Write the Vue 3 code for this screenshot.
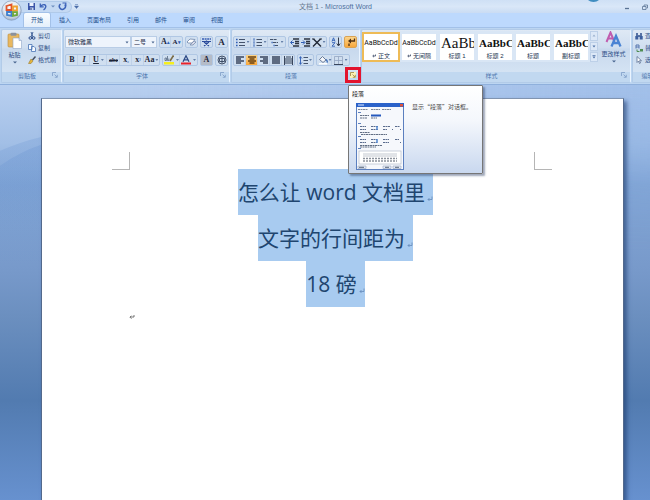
<script setup>
import { ref } from 'vue'

const tabs = ['开始', '插入', '页面布局', '引用', '邮件', '审阅', '视图']
const active = ref('开始')
const fontName = ref('微软雅黑')
const fontSize = ref('二号')
const lines = ['怎么让 word 文档里', '文字的行间距为', '18 磅']
const styles = [
  { sample: 'AaBbCcDd', name: '正文', kind: 'plain', mark: true, on: true },
  { sample: 'AaBbCcDd', name: '无间隔', kind: 'plain', mark: true },
  { sample: 'AaBb', name: '标题 1', kind: 'large' },
  { sample: 'AaBbC', name: '标题 2', kind: 'medium' },
  { sample: 'AaBbC', name: '标题', kind: 'medium' },
  { sample: 'AaBbC', name: '副标题', kind: 'medium' }
]
</script>

<template>
  <div class="app">
    <header class="top">
      <div class="titlebar">
        <div class="quick">
          <button class="ic" aria-label="保存">
            <svg width="9" height="9" viewBox="0 0 9 9"><path d="M1 1h7v7H1z" fill="#3b55a8" /><path d="M2.5 1h4v3h-4z" fill="#eef4ff" /><path d="M3 5.5h3.500V8H3z" fill="#c6d6f0" /><path d="M3.500 6h1v2h-1z" fill="#28387c" /></svg>
          </button>
          <button class="ic" aria-label="撤销">
            <svg width="9" height="9" viewBox="0 0 9 9"><path d="M1.300 1.500v3.300h3.400" fill="none" stroke="#3c62b8" stroke-width="1.300" /><path d="M1.500 4.500C4 1.500 8 2.500 6.500 5.500Q6 7 4.500 8" fill="none" stroke="#3c62b8" stroke-width="1.400" /></svg>
          </button>
          <svg width="4" height="3" viewBox="0 0 4 3"><path d="M0 .5h4L2 2.500z" fill="#6d8fbf" /></svg>
          <button class="ic" aria-label="恢复">
            <svg width="9" height="9" viewBox="0 0 9 9"><path d="M2.500 2A3 3 0 1 0 6.800 2.500" fill="none" stroke="#3c62b8" stroke-width="1.500" /><path d="M4.500 1h3.300v3" fill="none" stroke="#3c62b8" stroke-width="1.200" /></svg>
          </button>
        </div>
        <svg class="more" width="5" height="5" viewBox="0 0 5 5"><path d="M1 .5h3M.5 2h4L2.500 4.500z" fill="#4a6da8" stroke="#4a6da8" stroke-width=".5" /></svg>
        <h1 class="title">文档 1 - <span>Microsoft Word</span></h1>
        <div class="win">
          <button class="ic" aria-label="最小化"><svg width="6" height="6" viewBox="0 0 6 6"><path d="M1 4.500h4" stroke="#5a7394" stroke-width="1.300" /></svg></button>
          <button class="ic" aria-label="还原"><svg width="6" height="6" viewBox="0 0 6 6"><path d="M2 2V1h3.500v3h-1M.5 2.500H4v3H.5z" fill="none" stroke="#5a7394" stroke-width=".8" /></svg></button>
        </div>
      </div>
      <div class="bubble"></div>
      <nav class="tabs">
        <button v-for="t in tabs" :key="t" class="tab" :class="{ on: t === active }" @click="active = t">{{ t }}</button>
      </nav>
      <button class="orb" aria-label="Office">
        <svg width="21" height="21" viewBox="0 0 21 21">
          <defs><radialGradient id="orb" cx=".5" cy=".35" r=".65"><stop offset="0" stop-color="#ffffff" /><stop offset=".65" stop-color="#dfe6ef" /><stop offset="1" stop-color="#9fb0c8" /></radialGradient></defs>
          <circle cx="10.500" cy="10.500" r="9.700" fill="url(#orb)" stroke="#7f95b5" stroke-width=".7" />
          <g fill="none" stroke-width="1.800"><path d="M5.500 6l5-1.500V10h-5z" stroke="#e2552b" /><path d="M12 6.500h4v4h-4z" stroke="#f0a030" /><path d="M6 12h4.500v4L6 15z" stroke="#3f7fce" /><path d="M12 12.200h4v2.800l-4 .8z" stroke="#6da83a" /></g>
        </svg>
      </button>
    </header>

    <section class="ribbon">
      <div class="group clip">
        <div class="body cliprow">
          <button class="big">
            <svg width="15" height="17" viewBox="0 0 15 17"><rect x="1" y="2" width="11" height="13" rx="1" fill="#e9b860" stroke="#b88a3c" stroke-width=".6" /><rect x="3.500" y=".7" width="6" height="3" rx="1" fill="#8b919c" /><path d="M6 6h6l2.500 2.500v8H6z" fill="#fff" stroke="#8fa6c9" stroke-width=".6" /><path d="M12 6v2.500h2.500" fill="#d4e0f2" stroke="#8fa6c9" stroke-width=".6" /></svg>
            <span>粘贴</span>
            <svg width="4" height="3" viewBox="0 0 4 3"><path d="M0 .5h4L2 2.500z" fill="#49658f" /></svg>
          </button>
          <div class="list">
            <button class="line"><svg width="8" height="8" viewBox="0 0 8 8"><path d="M3 0l2 5M5 0L3 5" stroke="#45649c" /><circle cx="2.300" cy="6" r="1.300" fill="none" stroke="#2c4c8a" /><circle cx="5.700" cy="6" r="1.300" fill="none" stroke="#2c4c8a" /></svg>剪切</button>
            <button class="line"><svg width="8" height="8" viewBox="0 0 8 8"><path d="M.5.5h3.500v5H.5zM3.500 2.500H6l1.500 1.500v3.500h-4z" fill="#f6faff" stroke="#4a73b5" stroke-width=".8" /></svg>复制</button>
            <button class="line"><svg width="8" height="8" viewBox="0 0 8 8"><path d="M7.500.5L4.500 4" stroke="#444c5c" stroke-width="1.500" /><path d="M3 3l2 2-2 2.500H.5z" fill="#e5b53c" stroke="#8c6c20" stroke-width=".5" /></svg>格式刷</button>
          </div>
        </div>
        <div class="cap"><span>剪贴板</span><button class="launch" aria-label="剪贴板选项"><svg width="6" height="6" viewBox="0 0 6 6"><path d="M.5 4V.5H4M2.500 2.500L5 5M5.300 2.800v2.500H2.800" fill="none" stroke="#7f9dc6" stroke-width=".8" /></svg></button></div>
      </div>

      <div class="group">
        <div class="body rows">
          <div class="row slim">
            <div class="combos">
              <label class="combo font"><select v-model="fontName" aria-label="字体"><option>微软雅黑</option></select><svg width="4" height="3" viewBox="0 0 4 3"><path d="M.5.5h3L2 2.500z" fill="#49658f" /></svg></label>
              <label class="combo size"><select v-model="fontSize" aria-label="字号"><option>二号</option></select><svg width="4" height="3" viewBox="0 0 4 3"><path d="M.5.5h3L2 2.500z" fill="#49658f" /></svg></label>
            </div>
            <div class="seg">
              <button class="tb serif">A<sup>▴</sup></button>
              <button class="tb serif small">A<sup>▾</sup></button>
            </div>
            <div class="seg"><button class="tb" aria-label="清除格式"><svg width="11" height="10" viewBox="0 0 11 10"><path d="M1 5l3-3 5 .5L6 6H2z" fill="#fff" stroke="#6f85a8" stroke-width=".8" /><path d="M4 8l4-4 2 1-3 3z" fill="#d9d9e8" stroke="#6f85a8" stroke-width=".7" /></svg></button></div>
            <div class="seg"><button class="tb" aria-label="拼音指南"><svg width="11" height="10" viewBox="0 0 11 10"><path d="M1 2h9" stroke="#385fb4" stroke-width="1.600" stroke-dasharray="2 .6" /><path d="M1 4.500h9M3 5l5 4M8 5L3 9M5.500 3.500v2" fill="none" stroke="#2c4c9c" stroke-width="1.200" /></svg></button></div>
            <div class="seg"><button class="tb serif boxed">A</button></div>
          </div>
          <div class="row">
            <div class="seg">
              <button class="tb serif">B</button>
              <button class="tb serif ital">I</button>
              <button class="tb serif wide"><u>U</u><i class="dd"></i></button>
              <button class="tb serif tiny"><s>abc</s></button>
              <button class="tb serif">x<sub>₂</sub></button>
              <button class="tb serif">x<sup>²</sup></button>
              <button class="tb serif mid">Aa<i class="dd"></i></button>
            </div>
            <div class="seg">
              <button class="tb wide" aria-label="突出显示"><svg width="10" height="10" viewBox="0 0 10 10"><path d="M0 7h10v2.500H0z" fill="#f5ee1e" /><path d="M1 5.500V3h1.500v2.500zM3.500 1v4.500h1.300V3.500" fill="none" stroke="#63758c" stroke-width=".9" /><path d="M9.500.5L6 6" stroke="#7a6c48" stroke-width="1.600" /></svg><i class="dd"></i></button>
              <button class="tb wide" aria-label="字体颜色"><svg width="10" height="10" viewBox="0 0 10 10"><path d="M0 7.500h10v2H0z" fill="#e8202a" /><path d="M2 6.800L5 .8l3 6M3.300 4.800h3.400" fill="none" stroke="#2e4a86" stroke-width="1.300" /></svg><i class="dd"></i></button>
            </div>
            <div class="seg slimseg"><button class="tb serif shade">A</button></div>
            <div class="seg slimseg"><button class="tb" aria-label="带圈字符"><svg width="10" height="10" viewBox="0 0 10 10"><circle cx="5" cy="5" r="4" fill="none" stroke="#34435c" stroke-width=".9" /><path d="M2.500 3.500h5v3h-5zM5 1.500v7" fill="none" stroke="#34435c" stroke-width=".9" /></svg></button></div>
          </div>
        </div>
        <div class="cap"><span>字体</span><button class="launch" aria-label="字体选项"><svg width="6" height="6" viewBox="0 0 6 6"><path d="M.5 4V.5H4M2.500 2.500L5 5M5.300 2.800v2.500H2.800" fill="none" stroke="#7f9dc6" stroke-width=".8" /></svg></button></div>
      </div>

      <div class="group para">
        <div class="body rows">
          <div class="row slim">
            <div class="seg">
              <button class="tb wide" aria-label="项目符号"><svg width="9" height="9" viewBox="0 0 9 9"><path d="M3 1.500h6M3 4.500h6M3 7.500h6" stroke="#44536c" /><path d="M0 1.500h1.600M0 4.500h1.600M0 7.500h1.600" stroke="#2f5eb5" stroke-width="1.600" /></svg><i class="dd"></i></button>
              <button class="tb wide" aria-label="编号"><svg width="9" height="9" viewBox="0 0 9 9"><path d="M3.500 1.500H9M3.500 4.500H9M3.500 7.500H9" stroke="#44536c" /><path d="M1 .3v2.400M1 3.300v2.400M1 6.300v2.400" stroke="#2f5eb5" /></svg><i class="dd"></i></button>
              <button class="tb wide" aria-label="多级列表"><svg width="9" height="9" viewBox="0 0 9 9"><path d="M0 1.500h7M3 4.500h5M5 7.500h3" stroke="#44536c" stroke-dasharray="3 .6" /><path d="M1.500 4.500h1.200M3.500 7.500h1.200" stroke="#2f5eb5" stroke-width="1.300" /></svg><i class="dd"></i></button>
            </div>
            <div class="seg">
              <button class="tb" aria-label="减少缩进"><svg width="10" height="9" viewBox="0 0 10 9"><path d="M3 1h6M5 3.500h4M5 5.500h4M3 8h6" stroke="#2c3442" stroke-width="1.400" /><path d="M4 4.500H1M2.500 2.500l-2 2 2 2" fill="none" stroke="#2f5eb5" /></svg></button>
              <button class="tb" aria-label="增加缩进"><svg width="10" height="9" viewBox="0 0 10 9"><path d="M3 1h6M5 3.500h4M5 5.500h4M3 8h6" stroke="#2c3442" stroke-width="1.400" /><path d="M0 4.500h3.500M2 2.500l2 2-2 2" fill="none" stroke="#2f5eb5" /></svg></button>
              <button class="tb mid" aria-label="中文版式"><svg width="10" height="9" viewBox="0 0 10 9"><path d="M1 8.500l4-4 4 4M1.500 1L5 4.500 8.500 1" fill="none" stroke="#222a38" stroke-width="1.400" /><path d="M0 1h2.500M7.500 1H10" stroke="#222a38" /></svg><i class="dd"></i></button>
            </div>
            <div class="seg"><button class="tb" aria-label="排序"><svg width="10" height="10" viewBox="0 0 10 10"><path d="M1 4.500L2.500.8 4 4.500M1.500 3.300h2M1 5.700h3L1 9.200h3" fill="none" stroke="#2f5eb5" stroke-width=".9" /><path d="M7.500.5v8M5.800 6.500l1.700 2.500 1.700-2.500" fill="none" stroke="#333c4e" /></svg></button></div>
            <div class="seg hot"><button class="tb" aria-label="显示编辑标记"><svg width="10" height="10" viewBox="0 0 10 10"><path d="M8.500 1.500v2.500H4" fill="none" stroke="#503012" stroke-width="1.300" /><path d="M5 1.500L2 4l3 2.500z" fill="#503012" /><path d="M3 6.500v2.500" stroke="#503012" stroke-width="1.300" /></svg></button></div>
          </div>
          <div class="row">
            <div class="seg">
              <button class="tb" aria-label="左对齐"><svg width="8" height="9" viewBox="0 0 8 9"><path d="M0 1h8M0 3h5M0 5h8M0 7h5" stroke="#39465c" stroke-width="1.300" /></svg></button>
              <button class="tb pressed" aria-label="居中"><svg width="8" height="9" viewBox="0 0 8 9"><path d="M0 1h8M1.500 3h5M0 5h8M1.500 7h5" stroke="#6b4312" stroke-width="1.300" /></svg></button>
              <button class="tb" aria-label="右对齐"><svg width="8" height="9" viewBox="0 0 8 9"><path d="M0 1h8M3 3h5M0 5h8M3 7h5" stroke="#39465c" stroke-width="1.300" /></svg></button>
              <button class="tb" aria-label="两端对齐"><svg width="8" height="9" viewBox="0 0 8 9"><path d="M0 1h8M0 3h8M0 5h8M0 7h8" stroke="#39465c" stroke-width="1.300" /></svg></button>
              <button class="tb" aria-label="分散对齐"><svg width="9" height="9" viewBox="0 0 9 9"><path d="M1 3h7M1 5h7M1 7h7M.5 0v9M8.500 0v9M2 1h5" stroke="#39465c" /></svg></button>
            </div>
            <div class="seg"><button class="tb mid" aria-label="行距"><svg width="9" height="9" viewBox="0 0 9 9"><path d="M4.500 1.500H9M4.500 4.500H9M4.500 7.500H9" stroke="#44536c" /><path d="M1.500.5v8M0 2.500L1.500.8 3 2.500M0 6.500l1.500 1.700L3 6.500" fill="none" stroke="#2f5eb5" stroke-width=".9" /></svg><i class="dd"></i></button></div>
            <div class="seg">
              <button class="tb mid" aria-label="底纹"><svg width="10" height="10" viewBox="0 0 10 10"><path d="M1.500 4.500L4.500 1.500l3.500 3.500-3 2.500z" fill="#f5f7fb" stroke="#5d6f8c" stroke-width=".9" /><path d="M8 4.500q2 2 .8 3" fill="none" stroke="#3568b8" stroke-width="1.200" /><path d="M1 8.800h8" stroke="#fff" stroke-width="1.500" /></svg><i class="dd"></i></button>
              <button class="tb wide" aria-label="边框"><svg width="9" height="9" viewBox="0 0 9 9"><path d="M.5.5h8v8M.5.5v8M4.500.5v8M.5 4.500h8" fill="none" stroke="#93a5c2" stroke-width=".8" /><path d="M0 8.500h9" stroke="#39465c" /></svg><i class="dd"></i></button>
            </div>
          </div>
        </div>
        <div class="cap"><span>段落</span><button class="launch lit" aria-describedby="tip" aria-label="段落选项"><svg width="6" height="6" viewBox="0 0 6 6"><path d="M.5 4V.5H4M2.500 2.500L5 5M5.300 2.800v2.500H2.800" fill="none" stroke="#9a8340" stroke-width=".8" /></svg></button></div>
        <div id="tip" class="tip" role="tooltip">
          <strong>段落</strong>
          <div class="tiprow">
            <svg width="48" height="67" viewBox="0 0 48 67">
              <rect x=".5" y=".5" width="47" height="66" fill="#f6f8fc" stroke="#5b7fbf" /><path d="M0 0h48v4H0z" fill="#2b62c9" /><path d="M2 2h6" stroke="#dce8ff" /><path d="M44 1h3v2.500h-3z" fill="#e0533a" />
              <path d="M2 6.500h10M15 6.500h9M26 6.500h9" stroke="#7d8796" stroke-dasharray="2 .5" />
              <path d="M2 9.500h3M2 20.500h3M2 33.500h3M2 45.500h3" stroke="#5d80bd" />
              <path d="M4 12.500h9M4 15h7M15 15h6" stroke="#626f84" stroke-dasharray="2 .5" /><path d="M15 12.500h10" stroke="#2458bd" stroke-width="2" />
              <path d="M4 23.500h6M15 23.500h7M27 23.500h7M39 23.500h5M4 26.500h6M15 26.500h7M27 26.500h4M36 26.500h1M44 26.500h1M4 36.500h6M15 36.500h6M27 36.500h6M39 36.500h4M4 39.500h6M15 39.500h6M27 39.500h6M44 39.500h1" stroke="#5a6c8e" stroke-dasharray="2 .5" />
              <path d="M21 23v4M21 36v4" stroke="#5085d0" stroke-width="1.500" />
              <path d="M4 29.500h10M5 31.500h26M4 42.500h22M4 44h16" stroke="#626f84" stroke-dasharray="2 .5" />
              <rect x="3" y="48" width="42" height="13" fill="#fff" stroke="#a8b2c2" stroke-width=".6" />
              <path d="M7 51h34M7 53h34" stroke="#c3c8d0" /><path d="M7 55.500h34M7 58h34" stroke="#8b919b" stroke-width="1.500" stroke-dasharray="2 1" />
              <path d="M2 63h8v2.500H2zM27 63h8v2.500h-8zM37 63h8v2.500h-8z" fill="#e8edf6" stroke="#8495b0" stroke-width=".5" /><path d="M29 64.300h4M39 64.300h4M3 64.300h5" stroke="#58657a" />
            </svg>
            <p>显示“段落”对话框。</p>
          </div>
        </div>
      </div>

      <div class="group">
        <div class="body stylerow">
          <div class="gallery">
            <button v-for="s in styles" :key="s.name" class="card" :class="{ chosen: s.on }">
              <span class="sample" :class="s.kind">{{ s.sample }}</span>
              <span class="sname"><svg v-if="s.mark" width="4" height="4" viewBox="0 0 4 4"><path d="M3.500.5v1.500H1M2 .8L.7 2 2 3.200" fill="none" stroke="#3c4a66" stroke-width=".8" /></svg>{{ s.name }}</span>
            </button>
          </div>
          <div class="scroll">
            <button aria-label="上一行"><svg width="4" height="3" viewBox="0 0 4 3"><path d="M.5 2.500h3L2 .5z" fill="#9bb0cd" /></svg></button>
            <button aria-label="下一行"><svg width="4" height="3" viewBox="0 0 4 3"><path d="M.5.5h3L2 2.500z" fill="#4d70a5" /></svg></button>
            <button aria-label="其他"><svg width="4" height="4" viewBox="0 0 4 4"><path d="M.5 0h3v.8h-3zM.5 1.500h3L2 3.500z" fill="#4d70a5" /></svg></button>
          </div>
          <button class="big change">
            <svg width="17" height="17" viewBox="0 0 17 17"><path d="M1.500 11L5.500 1.500 9.500 11M3 7.500h5" fill="none" stroke="#c05cae" stroke-width="2" /><path d="M6.500 15.500L11 5l4.500 10.500M8 12h6" fill="none" stroke="#4a84d4" stroke-width="2.300" /></svg>
            <span>更改样式</span>
            <svg width="4" height="3" viewBox="0 0 4 3"><path d="M0 .5h4L2 2.500z" fill="#49658f" /></svg>
          </button>
        </div>
        <div class="cap"><span>样式</span><button class="launch" aria-label="样式选项"><svg width="6" height="6" viewBox="0 0 6 6"><path d="M.5 4V.5H4M2.500 2.500L5 5M5.300 2.800v2.500H2.800" fill="none" stroke="#7f9dc6" stroke-width=".8" /></svg></button></div>
      </div>

      <div class="group">
        <div class="body edit">
          <div class="list">
            <button class="line"><svg width="8" height="8" viewBox="0 0 8 8"><path d="M2 1v3M6 1v3M4 3v2" stroke="#2c4c8a" stroke-width="1.500" /><path d="M.3 4h3v3.500h-3zM4.700 4h3v3.500h-3z" fill="#3d5f9e" /></svg>查找</button>
            <button class="line"><svg width="8" height="8" viewBox="0 0 8 8"><path d="M1 4.500V1h3v3.500M1 3h3" fill="none" stroke="#5677ae" /><path d="M2 5.500v2h2.500" fill="none" stroke="#4f8d52" /><path d="M5 5h3v2.500H5z" fill="#4f8d52" /></svg>替换</button>
            <button class="line"><svg width="8" height="8" viewBox="0 0 8 8"><path d="M2 .5v6l1.500-1.500 1 2.500 1-.5-1-2.300h2z" fill="#fff" stroke="#5a6f92" stroke-width=".8" /></svg>选择</button>
          </div>
        </div>
        <div class="cap"><span>编辑</span></div>
      </div>
    </section>

    <main class="desk">
      <svg class="swoosh" viewBox="0 0 650 416" preserveAspectRatio="none"><defs><linearGradient id="sw" x1="0" y1="0" x2="0" y2="1"><stop offset="0" stop-color="#5d8bcd" stop-opacity=".28" /><stop offset="1" stop-color="#5d8bcd" stop-opacity="0" /></linearGradient></defs><path d="M0 66Q20 57 41 52L200 30V140H0z" fill="url(#sw)" /><path d="M0 81Q20 67 41 60L200 40V180H0z" fill="url(#sw)" /></svg>
      <article class="page">
        <div class="marks"><i class="crop left"></i><i class="crop right"></i></div>
        <div class="doc">
          <p v-for="l in lines" :key="l">{{ l }}<svg width="6" height="6" viewBox="0 0 6 6"><path d="M5 .5v3H1M2.500 2L1 3.500 2.500 5" fill="none" stroke="#5c83b3" stroke-width=".7" /></svg></p>
        </div>
        <svg class="pilcrow" width="6" height="6" viewBox="0 0 6 6"><path d="M5 1v2H1M2.500 1.700L1 3.200l1.500 1.500" fill="none" stroke="#555" stroke-width=".8" /></svg>
      </article>
    </main>
  </div>
</template>

<style>
html, body { margin: 0; background: #527bb0; }
</style>

<style scoped>
.app { min-height: 100vh; display: flex; flex-direction: column; overflow: hidden; font: 6px/8px "Liberation Sans", "Noto Sans CJK SC", sans-serif; color: #2f4f86; }
.app * { box-sizing: border-box; }
button { border: 0; padding: 0; margin: 0; background: none; font: inherit; color: inherit; }
svg { display: block; flex: none; }
p, h1 { margin: 0; }

.top { position: relative; background: #bdd9fd; }
.titlebar { display: flex; align-items: center; height: 13px; background: linear-gradient(#cfe0f5, #d9e7f8 50%, #cadcf3); padding-right: 2px; }
.quick { display: flex; align-items: center; gap: 3px; height: 12px; margin-left: 18px; padding: 0 4px 0 9px; border-radius: 0 6px 6px 0; background: #c4d9f3; border: 1px solid #b0cae9; border-left: 0; }
.more { margin-left: 2px; }
.title { flex: 1; padding-right: 32px; text-align: center; font-size: 7px; font-weight: 400; color: #66788f; }
.title span { color: #4d6f9e; }
.win { display: flex; gap: 12px; }
.bubble { position: absolute; top: -7px; right: 48px; width: 17px; height: 9px; border-radius: 0 0 9px 9px; background: #3f8dc0; }
.tabs { display: flex; gap: 2px; height: 14px; padding-left: 24px; align-items: stretch; }
.tab { padding: 0 7px; color: #24508f; }
.tab.on { background: linear-gradient(#fafdff, #e4effb); border-radius: 2px 2px 0 0; box-shadow: 0 0 0 1px #a3c1e8; }
.orb { position: absolute; left: 1px; top: 0; z-index: 2; }

.ribbon { position: relative; z-index: 1; display: flex; gap: 1px; padding: 1px 0 1px 1px; background: #bcd5f1; border-top: 1px solid #a3c1e8; }
.group { position: relative; flex: none; display: flex; flex-direction: column; border: 1px solid #b2cbe8; border-right-color: #eaf4ff; border-radius: 2px; background: linear-gradient(#dfe9f5, #cfdef0 35%, #c8d9ed 36%, #d9e7f6); }
.body { height: 42px; padding: 0 2px; }
.rows { display: flex; flex-direction: column; gap: 6px; padding: 6px 1px 0; }
.row { display: flex; gap: 2px; }
.cap { display: flex; height: 10px; line-height: 9px; padding-right: 3px; background: #c1d8f0; color: #5077ae; }
.cap span { flex: 1; text-align: center; }
.launch { width: 6px; height: 6px; position: relative; }
.lit { background: #fdf1b4; }
.lit::after { content: ""; position: absolute; inset: -5px; border: 3px solid #e3142e; z-index: 3; }

.clip { width: 61px; }
.cliprow { display: flex; gap: 6px; padding: 2px 0 0 5px; }
.big { display: flex; flex-direction: column; align-items: center; gap: 2px; }
.list { display: flex; flex-direction: column; gap: 4px; padding-top: 2px; }
.cliprow .list { padding-top: 0; }
.line { display: flex; align-items: center; gap: 2px; height: 8px; white-space: nowrap; }
.edit { width: 32px; }

.combos { display: flex; }
.combo { position: relative; display: block; }
.combo select { appearance: none; display: block; width: 100%; height: 12px; margin: 0; padding: 0 2px; border: 1px solid #b9cde6; border-radius: 0; background: #eef4fc; font: inherit; color: #1d2c48; }
.combo svg { position: absolute; right: 2px; top: 5px; pointer-events: none; }
.font { width: 66px; }
.size { width: 26px; }
.seg { display: flex; height: 12px; border: 1px solid #b0c7e4; border-radius: 2px; background: #d0dff0; }
.tb { display: flex; align-items: center; justify-content: center; width: 12px; }
.tb + .tb { box-shadow: -1px 0 #bfd1e8; }
.slim .tb, .slimseg .tb { width: 11px; }
.tb.wide { width: 17px; }
.tb.mid { width: 15px; }
.serif { font-family: "Liberation Serif", serif; font-weight: 700; font-size: 8px; color: #1c2538; }
.small { font-size: 7px; }
.tb.tiny { width: 13px; font-size: 6px; }
.ital { font-style: italic; }
.serif sup, .serif sub { font-size: 5px; line-height: 5px; color: #2f5eb5; }
.shade { background: #b5bcc8; }
.boxed { font-size: 9px; }
.dd { width: 3px; height: 2px; margin-left: 2px; background: #6681a8; clip-path: polygon(0 0, 100% 0, 50% 100%); }
.mid .dd { margin-left: 1px; }
.hot, .pressed { background: linear-gradient(#fbd48a, #f9a83c); }
.hot { border-color: #d9a354; }
.para .body { padding-right: 2px; }

.stylerow { display: flex; padding: 1px 1px 0 2px; }
.gallery { display: flex; gap: 4px; padding: 3px 2px 0 0; height: 31px; background: #d9e6f5; }
.card { display: flex; flex-direction: column; width: 34px; height: 26px; background: #fff; }
.chosen { box-shadow: 0 0 0 2px #eebb56; }
.sample { display: flex; align-items: center; justify-content: center; width: 100%; height: 18px; color: #111; white-space: nowrap; }
.plain { font-family: Roboto, sans-serif; font-size: 7px; }
.large, .medium { justify-content: flex-start; overflow: hidden; font-family: "Liberation Serif", serif; padding-left: 1px; }
.large { font-size: 15px; font-weight: 400; }
.medium { font-size: 11px; font-weight: 700; }
.sname { display: flex; align-items: center; justify-content: center; gap: 2px; width: 100%; color: #22334f; }
.scroll { display: flex; flex-direction: column; gap: 1px; width: 8px; height: 31px; }
.scroll button { flex: 1; display: flex; align-items: center; justify-content: center; background: #dce8f7; border: 1px solid #bdd0e8; }
.change { width: 31px; }

.tip { position: absolute; left: 116px; top: 55px; width: 135px; height: 89px; padding: 4px 3px; border: 1px solid #767676; border-radius: 1px; background: linear-gradient(#fff, #f4f7fc 40%, #c9d8ef); box-shadow: 2px 2px 2px rgba(40, 60, 100, .45); color: #4c4c4c; font-family: "Noto Sans CJK SC", sans-serif; }
.tip strong { display: block; font-weight: 400; color: #222; }
.tiprow { display: flex; gap: 8px; padding: 5px 0 0 4px; }
.tiprow p { white-space: nowrap; }

.desk { position: relative; flex: 1; display: flex; padding: 13px 26px 0 41px; background: linear-gradient(#b9d0f0, #a2bfe6 14%, #84a7d6 24%, #7799ca 45%, #6b8fbf 56%, #527bb0 76%, #6791cf); border-top: 1px solid #8fb0dc; }
.desk::before { content: ""; position: absolute; inset: 0; background: linear-gradient(90deg, transparent 20%, rgba(110, 155, 220, .3)); -webkit-mask-image: linear-gradient(#000, transparent 40%); mask-image: linear-gradient(#000, transparent 40%); }
.swoosh { position: absolute; left: 0; top: 0; width: 100%; height: 100%; }
.page { position: relative; flex: 1; padding: 53px 71px 0 70px; background: #fff; border: 1px solid #53698c; border-bottom: 0; border-top-color: #8194b0; box-shadow: 3px 3px 4px rgba(30, 60, 110, .6); }
.marks { display: flex; justify-content: space-between; }
.crop { width: 18px; height: 18px; border-bottom: 1px solid #b5b5b5; }
.left { border-right: 1px solid #b5b5b5; }
.right { border-left: 1px solid #b5b5b5; }
.doc { display: flex; flex-direction: column; align-items: center; padding-left: 7px; margin-top: -1px; }
.doc p { display: flex; align-items: center; gap: 2px; height: 46px; background: #a8cbf0; color: #20456f; font: 21px/46px "Open Sans", "Noto Sans CJK SC", sans-serif; white-space: pre; }
.doc svg { margin-top: 14px; }
.pilcrow { margin: 7px 0 0 17px; }
</style>
